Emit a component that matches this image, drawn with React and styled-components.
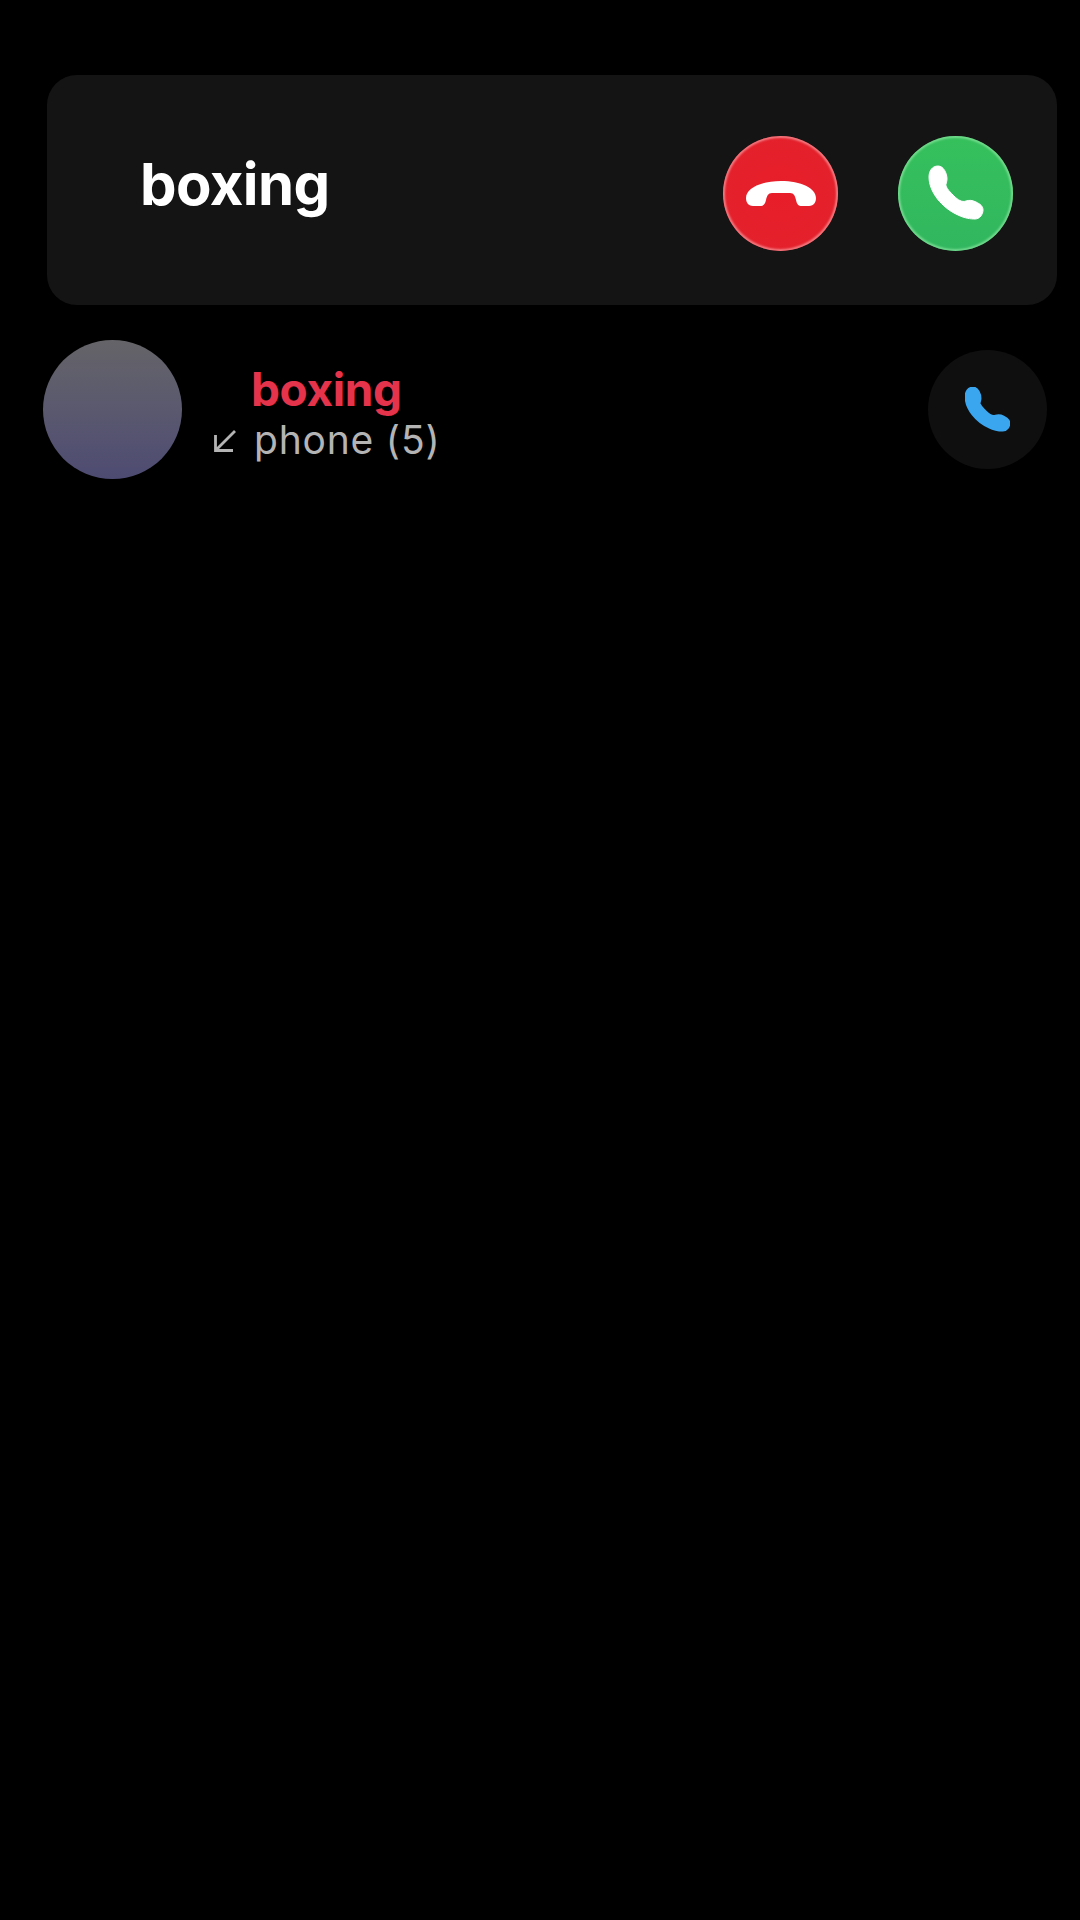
import React from "react";
import styled, { createGlobalStyle } from "styled-components";

const GlobalStyle = createGlobalStyle`
  html, body {
    margin: 0;
    padding: 0;
    background: #000;
  }
  body {
    font-family: Inter, "Liberation Sans", sans-serif;
  }
`;

const Page = styled.div`
  width: 1080px;
  height: 1920px;
  background: #000;
  overflow: hidden;
  padding-top: 75px;
  box-sizing: border-box;
`;

const IncomingCard = styled.div`
  display: flex;
  align-items: center;
  height: 230px;
  margin: 0 23px 0 47px;
  padding: 0 44px 0 93px;
  box-sizing: border-box;
  border-radius: 30px;
  background: #141415;
`;

const CallerName = styled.div`
  flex: 1;
  margin-top: -13px;
  font-size: 58px;
  font-weight: 700;
  letter-spacing: -0.6px;
  line-height: 70px;
  color: #fff;
`;

const CallActions = styled.div`
  display: flex;
  gap: 60px;
  margin-top: 6px;
`;

const RoundButton = styled.button`
  display: flex;
  align-items: center;
  justify-content: center;
  width: 115px;
  height: 115px;
  padding: 0;
  border: none;
  border-radius: 50%;
  box-sizing: border-box;
  background: ${({ $color }) => $color};
  box-shadow: inset 0 0 2px 2px ${({ $ring }) => $ring};
`;

const RecentRow = styled.div`
  display: flex;
  align-items: center;
  margin: 35px 33px 0 43px;
`;

const Avatar = styled.div`
  flex: none;
  width: 139px;
  height: 139px;
  border-radius: 50%;
  background: linear-gradient(180deg, #656468 0%, #5b5a6e 45%, #4e4b72 100%);
`;

const RecentText = styled.div`
  flex: 1;
  margin-left: 31px;
  padding-top: 9px;
`;

const RecentName = styled.div`
  padding-left: 38px;
  font-size: 46px;
  font-weight: 700;
  letter-spacing: -0.4px;
  line-height: 52px;
  color: #e5334b;
`;

const RecentMeta = styled.div`
  display: flex;
  align-items: center;
  gap: 17px;
  font-size: 39px;
  letter-spacing: 0.8px;
  line-height: 50px;
  color: #b4b4b4;
`;

const DialButton = styled.button`
  display: flex;
  align-items: center;
  justify-content: center;
  flex: none;
  width: 119px;
  height: 119px;
  padding: 0;
  border: none;
  border-radius: 50%;
  background: #0f0f10;
`;

const HANDSET =
  "M9 0C3 0 0 5 0 11C0 26 13 42 29 49C36 52.5 42 53 46 53C51 53 54 48 54 44C54 40 51 38 47 36C43 34 40 34 37 35C33 36.5 29 34 25 30C21 26 18 23 17 20C16.5 18 18 16 18 13C18 8 15 0 9 0Z";

const PhoneIcon = ({ size, color, thick }) => (
  <svg width={size} height={size} viewBox="-1 -1 56 56">
    <path
      d={HANDSET}
      fill={color}
      stroke={color}
      strokeWidth={thick ? 3 : 1}
      strokeLinejoin="round"
    />
  </svg>
);

const HangupIcon = () => (
  <svg width="70" height="25" viewBox="0 0 70 25">
    <path
      d="M0 17C0 7 15 0 35 0C55 0 70 7 70 17C70 21 68 25 63 25L56 25C52 25 51 23 50 19C49 15 48 12 44 12L26 12C22 12 21 15 20 19C19 23 18 25 14 25L7 25C2 25 0 21 0 17Z"
      fill="#fff"
    />
  </svg>
);

const IncomingArrow = () => (
  <svg width="24" height="25" viewBox="0 0 24 25" fill="none">
    <path d="M22 3L4 21M2.5 7V22.5H20" stroke="#b4b4b4" strokeWidth="2.8" />
  </svg>
);

export default function App() {
  return (
    <Page>
      <GlobalStyle />
      <IncomingCard>
        <CallerName>boxing</CallerName>
        <CallActions>
          <RoundButton
            $color="radial-gradient(circle, #e81e2a 0%, #e3212c 80%, #e2303a 100%)"
            $ring="rgba(245, 150, 155, 0.75)"
          >
            <HangupIcon />
          </RoundButton>
          <RoundButton
            $color="linear-gradient(180deg, #36c05c 0%, #31b75f 100%)"
            $ring="rgba(140, 230, 160, 0.7)"
          >
            <PhoneIcon size={56} color="#fff" />
          </RoundButton>
        </CallActions>
      </IncomingCard>
      <RecentRow>
        <Avatar />
        <RecentText>
          <RecentName>boxing</RecentName>
          <RecentMeta>
            <IncomingArrow />
            <span>phone (5)</span>
          </RecentMeta>
        </RecentText>
        <DialButton>
          <PhoneIcon size={45} color="#3ba6f0" thick />
        </DialButton>
      </RecentRow>
    </Page>
  );
}
